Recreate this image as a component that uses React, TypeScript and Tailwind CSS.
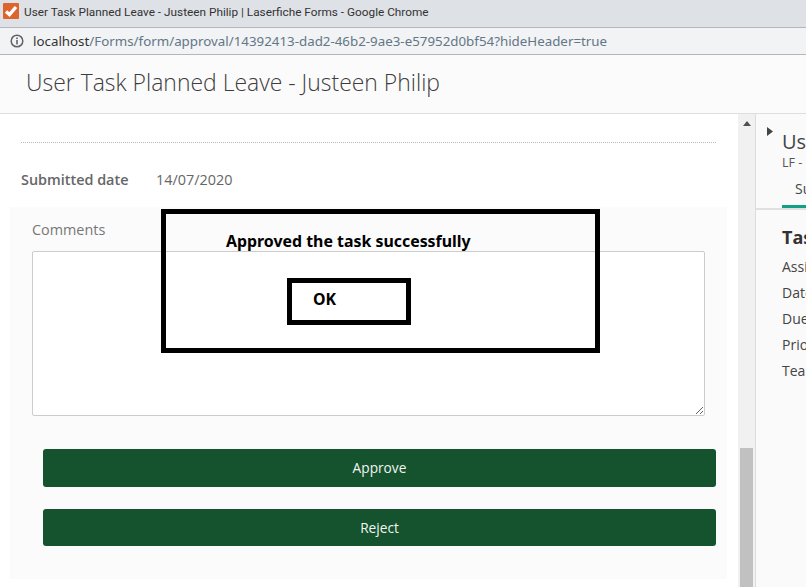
import { ReactNode } from 'react'

const DETAILS = ['Assigned to', 'Date created', 'Due date', 'Priority', 'Team']

function ActionButton({ children, height }: { children: ReactNode; height: string }) {
  return (
    <button className={`flex w-full items-center justify-center rounded-[3px] bg-[#14532d] pt-[1px] text-[13.7px] font-medium text-[#f1f5f2] ${height}`}>
      {children}
    </button>
  )
}

export default function App() {
  return (
    <div className="relative flex h-[587px] w-[806px] flex-col overflow-hidden bg-white font-['Open_Sans',sans-serif]">
      {/* browser title bar */}
      <div className="flex h-[28px] shrink-0 items-start border-b border-[#b4b6b9] bg-[#dee1e6] pt-[3px] pl-[3px]">
        <svg width="16" height="16" viewBox="0 0 16 16" className="shrink-0">
          <rect width="16" height="16" rx="1" fill="#dd642c" />
          <path d="M3 8.5 L6.5 11.5 L13 4" fill="none" stroke="#fff" strokeWidth="3.4" />
        </svg>
        <span className="ml-[5px] whitespace-nowrap font-['Roboto',sans-serif] text-[11.8px] leading-[18px] text-[#333]">
          User Task Planned Leave - Justeen Philip | Laserfiche Forms - Google Chrome
        </span>
      </div>

      {/* address bar */}
      <div className="flex h-[27px] shrink-0 items-center border-b border-[#b4b6b9] bg-[#f1f3f4] pl-[10px]">
        <svg width="14" height="14" viewBox="0 0 14 14" className="shrink-0">
          <circle cx="7" cy="7" r="5.8" fill="none" stroke="#5f6368" strokeWidth="1.5" />
          <rect x="6.2" y="6" width="1.6" height="4.4" fill="#5f6368" />
          <rect x="6.2" y="3.5" width="1.6" height="1.6" fill="#5f6368" />
        </svg>
        <span className="ml-[9px] whitespace-nowrap pt-[1px] font-['Noto_Sans',sans-serif] text-[13.33px] text-[#647687]">
          <span className="text-[#333]">localhost</span>/Forms/form/approval/14392413-dad2-46b2-9ae3-e57952d0bf54?hideHeader=true
        </span>
      </div>

      {/* page header */}
      <div className="flex h-[59px] shrink-0 items-center border-b border-[#dedede] bg-[#fbfbfb] pb-[3px] pl-[26px]">
        <h1 className="text-[22.95px] font-light text-[#3d3d3d]">User Task Planned Leave - Justeen Philip</h1>
      </div>

      <div className="flex min-h-0 flex-1">
        {/* form column */}
        <div className="w-[738px] shrink-0 pt-[28px]">
          <div className="mx-[21px] mr-[22px] border-t border-dotted border-[#bbb]" />
          <div className="mt-[27px] flex h-[20px] items-center pl-[21px] text-[14.4px]">
            <span className="w-[135px] font-semibold text-[#666]">Submitted date</span>
            <span className="text-[#666]">14/07/2020</span>
          </div>
          <div className="mt-[17px] ml-[10px] h-[372px] w-[717px] bg-[#fbfbfb] pt-[13px]">
            <div className="ml-[22px] text-[14.4px] leading-[20px] text-[#777]">Comments</div>
            <textarea className="mt-[11px] ml-[22px] block h-[165px] w-[673px] rounded-[2px] border border-[#ccc] bg-white" />
            <div className="mt-[33px] ml-[33px] flex w-[673px] flex-col gap-[22px]">
              <ActionButton height="h-[38px]">Approve</ActionButton>
              <ActionButton height="h-[37px]">Reject</ActionButton>
            </div>
          </div>
        </div>

        {/* scrollbar */}
        <div className="flex w-[17px] shrink-0 flex-col items-center justify-between bg-[#f1f1f1]">
          <svg width="8" height="5" viewBox="0 0 8 5" className="mt-[7px]">
            <path d="M4 0 L8 5 L0 5 Z" fill="#505050" />
          </svg>
          <div className="h-[139px] w-[13px] bg-[#c1c1c1]" />
        </div>

        {/* side panel, cut off by the window */}
        <div className="w-[51px] shrink-0 overflow-hidden border-l border-[#dcdcdc] bg-[#fafafa]">
          <div className="relative h-[96px] w-[400px] border-b-2 border-[#e0e0e0]">
            <svg width="6" height="9" viewBox="0 0 6 9" className="absolute top-[13px] left-[11px]">
              <path d="M0 0 L6 4.5 L0 9 Z" fill="#444" />
            </svg>
            <div className="pt-[13px] pl-[26px] text-[20px] leading-[30px] text-[#444]">User Task</div>
            <div className="pl-[26px] text-[12.5px] leading-[12px] text-[#555]">LF - Forms</div>
            <div className="mt-[10px] ml-[26px] w-[70px] border-b-[3px] border-[#12a085] pb-[6px] pl-[13px] text-[14px] leading-[20px] text-[#444]">
              Summary
            </div>
          </div>
          <div className="w-[400px] pt-[14px] pl-[26px]">
            <div className="text-[18px] leading-[26px] font-bold text-[#333]">Task</div>
            <div className="mt-[4px] flex flex-col">
              {DETAILS.map(label => (
                <div key={label} className="h-[26px] text-[14px] leading-[26px] text-[#444]">{label}</div>
              ))}
            </div>
          </div>
        </div>
      </div>

      {/* pasted-on message box; transparent, the textarea edge shows through */}
      <div className="absolute top-[209px] left-[161px] h-[144px] w-[439px] border-[5px] border-black">
        <div className="mt-[15px] ml-[60px] font-['Noto_Sans',sans-serif] text-[15.9px] leading-[24px] font-bold whitespace-nowrap text-black">
          Approved the task successfully
        </div>
        <div className="absolute top-[64px] left-[121px] h-[47px] w-[124px] border-[5px] border-black">
          <span className="absolute top-[4px] left-[21px] font-['Noto_Sans',sans-serif] text-[15.9px] leading-[24px] font-bold text-black">OK</span>
        </div>
      </div>
    </div>
  )
}
